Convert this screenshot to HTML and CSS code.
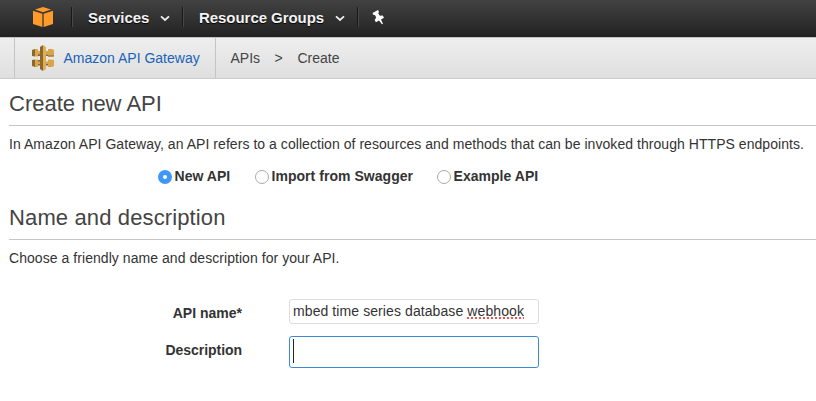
FILE: index.html
```html
<!DOCTYPE html>
<html lang="en">
<head>
<meta charset="utf-8">
<title>Create new API</title>
<link rel="stylesheet" href="styles.css">
</head>
<body>
<header class="topbar">
  <svg class="logo" width="20" height="20" viewBox="0 0 20 20">
    <path fill="#ff9b2b" d="M2 2.600 10 0l8 2.600-8 2.700zM0 3.800l9.400 2.900V20L0 17.100zM20 3.800l-9.400 2.900V20l9.400-2.900z"/>
  </svg>
  <nav class="menu">
    <span class="menu-item services"><span>Services</span><svg class="chevron" width="10" height="7" viewBox="0 0 10 7"><path d="M1 1.300 5 5l4-3.700"/></svg></span>
    <span class="menu-item groups"><span>Resource Groups</span><svg class="chevron" width="10" height="7" viewBox="0 0 10 7"><path d="M1 1.300 5 5l4-3.700"/></svg></span>
    <span class="menu-item pin"><svg width="13" height="15" viewBox="0 0 13 15"><path fill="#fff" d="M.5 3 6 0l1 2-.8 1.300 1.600 2.500 2.900-.3 1.300 2.200-3 1.700 2 4.600-1 .3-3-3.900-3.100 1.800-1.200-2.200 1.500-2.500-1.300-2.600-1.500.1z"/></svg></span>
  </nav>
</header>
<div class="crumbs">
  <div class="product">
    <svg class="gateway" width="22" height="26" viewBox="0 0 22 26">
      <path fill="#8b6830" d="M0 5l3-1v7.500L0 11zM0 15l3-.5V22l-3-1zM3 6h5v5H3zM3 15h5v5H3z"/>
      <path fill="#d9a54b" d="M3 4h3v2h10V4h4l2 1v6l-2 .5h-4V9.500H6v2H3zM3 14.500h3v2h10v-2h4l2 .5v6l-2 1h-4v-2H6v2H3z"/>
      <path fill="#8b6830" d="M6 9.500h10V11H6zM6 19h10v1.500H6zM16 10.500h6v1h-6z"/>
      <path fill="#8b6830" d="M8 2l3-2v26l-3-2z"/>
      <path fill="#dfad52" d="M11 0l3 2v22l-3 2z"/>
    </svg>
    <span class="product-name">Amazon API Gateway</span>
  </div>
  <span class="crumb apis">APIs</span><span class="crumb sep">&gt;</span><span class="crumb create">Create</span>
</div>
<main>
  <h1>Create new API</h1>
  <p class="intro">In Amazon API Gateway, an API refers to a collection of resources and methods that can be invoked through HTTPS endpoints.</p>
  <div class="choices">
    <label class="choice first"><i class="radio on"></i><span>New API</span></label>
    <label class="choice second"><i class="radio"></i><span>Import from Swagger</span></label>
    <label class="choice"><i class="radio"></i><span>Example API</span></label>
  </div>
  <h1 class="second-title">Name and description</h1>
  <p class="hint">Choose a friendly name and description for your API.</p>
  <div class="form">
    <div class="label name-label">API name*</div>
    <div class="field"><span>mbed time series database <span class="misspelt">webhook</span></span></div>
    <div class="label desc-label">Description</div>
    <div class="field focused"><i class="caret"></i></div>
  </div>
</main>
</body>
</html>
```
FILE: styles.css
```css
* { box-sizing: border-box; }
body {
  margin: 0;
  height: 401px;
  overflow: hidden;
  background: #fff;
  color: #333;
  font: 14px/20px "Liberation Sans", Arial, sans-serif;
}
svg { display: block; flex: none; }
.topbar {
  display: flex;
  height: 37px;
  padding-left: 33px;
  background: linear-gradient(#424242, #222);
}
.logo { margin-top: 7px; }
.menu { display: flex; margin-left: 18px; padding-top: 7px; }
.menu-item {
  display: flex;
  align-items: center;
  height: 20px;
  padding-left: 16px;
  border-left: 1px solid #181818;
  box-shadow: inset 1px 0 #484848;
  color: #f3f3f3;
  font-size: 15px;
  font-weight: bold;
  white-space: nowrap;
  text-shadow: 0 1px 1px #000;
}
.menu-item > span { padding-top: 2px; }
.services { width: 111px; }
.services > span { width: 72px; letter-spacing: -.05px; }
.groups { width: 175px; }
.groups > span { width: 136px; letter-spacing: -.05px; }
.menu-item.pin { padding: 0 0 0 14px; width: 42px; }
.chevron { fill: none; stroke: #eee; stroke-width: 1.8; margin-top: 2px; }
.crumbs {
  display: flex;
  align-items: center;
  height: 42px;
  padding-left: 14px;
  border-top: 1px solid #c2c2c2;
  border-bottom: 1px solid #ccc;
  background: linear-gradient(#eee, #dfdfdf);
  color: #444;
}
.product {
  display: flex;
  align-items: center;
  width: 202px;
  height: 40px;
  padding-left: 17px;
  border: solid #c4c4c4;
  border-width: 0 1px;
}
.product-name { margin-left: 9.500px; color: #1a63b8; white-space: nowrap; }
.apis { width: 44px; margin-left: 14.500px; }
.sep { width: 23px; }
main { padding-left: 9px; }
h1 {
  height: 47px;
  margin: 0;
  padding-top: 12px;
  border-bottom: 1px solid #c6c6c6;
  color: #444;
  font-size: 22px;
  line-height: 26px;
  font-weight: normal;
}
p { margin: 0; white-space: nowrap; }
.intro { padding-top: 8px; height: 42px; letter-spacing: .05px; }
.choices { display: flex; height: 25px; padding-left: 149px; font-weight: bold; }
.choice { display: flex; height: 18px; line-height: 16px; white-space: nowrap; }
.choice span { margin-left: -.5px; letter-spacing: .04px; }
.first { width: 97px; }
.second { width: 182px; }
.radio {
  width: 14px;
  height: 14px;
  margin: 2px 3px 0 0;
  border: 1px solid #aaa;
  border-radius: 50%;
  background: #fff;
}
.radio.on { border: 5px solid #3f98f7; }
.second-title { letter-spacing: .13px; }
.hint { padding-top: 8px; height: 59px; letter-spacing: .055px; }
.form {
  display: grid;
  grid-template-columns: 233px 250px;
  column-gap: 47px;
  row-gap: 12px;
  grid-template-rows: 25px 32px;
}
.label { text-align: right; font-weight: bold; }
.name-label { padding-top: 4px; }
.desc-label { padding-top: 4px; letter-spacing: -.05px; }
.field {
  border: 1px solid #ddd;
  border-radius: 3px;
  padding: 1px 3px;
  white-space: nowrap;
  letter-spacing: .09px;
}
.focused { border-color: #3b8ad8; padding-top: 2px; }
.misspelt { text-decoration: underline dotted #f0524f 2px; text-underline-offset: 1px; text-decoration-skip-ink: none; }
.caret { display: block; width: 1px; height: 24px; background: #222; }
```
